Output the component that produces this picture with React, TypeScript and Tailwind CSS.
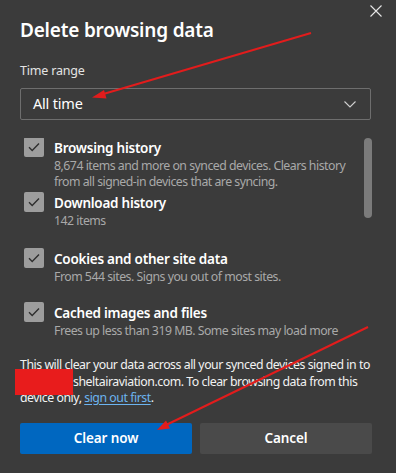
import React from "react";

const items = [
  {
    title: "Browsing history",
    desc: ["8,674 items and more on synced devices. Clears history", "from all signed-in devices that are syncing."],
    mt: "mt-0",
  },
  { title: "Download history", desc: ["142 items"], mt: "mt-[3px]" },
  { title: "Cookies and other site data", desc: ["From 544 sites. Signs you out of most sites."], mt: "mt-[20px]" },
  { title: "Cached images and files", desc: ["Frees up less than 319 MB. Some sites may load more"], mt: "mt-[18px]" },
];

function Check() {
  return (
    <div className="w-5 h-5 mt-[-1px] rounded-[2px] bg-[#9d9d9d] flex items-center justify-center shrink-0">
      <svg width="12" height="10" viewBox="0 0 12 10" fill="none">
        <path d="M1 5.2 L4.2 8.4 L11 1.6" stroke="#2e2e2e" strokeWidth="1.4" />
      </svg>
    </div>
  );
}

export default function App() {
  return (
    <div
      className="relative w-[396px] h-[473px] overflow-hidden bg-[#3b3b3b] text-white whitespace-nowrap"
      style={{ fontFamily: '"Noto Sans", "Open Sans", sans-serif' }}
    >
      <svg className="absolute left-[370px] top-[5px]" width="12" height="12" viewBox="0 0 12 12">
        <path d="M0.5 0.5 L11.5 11.5 M11.5 0.5 L0.5 11.5" stroke="#e6e6e6" strokeWidth="1.1" />
      </svg>

      <div className="pl-5 pr-[25px] pt-4">
        <div className="text-[19px] leading-[28px] font-semibold tracking-[-0.2px]">Delete browsing data</div>
        <div className="mt-[18px] text-[12.5px] leading-[18px] text-[#e4e4e4] tracking-[-0.2px]">Time range</div>
        <div className="mt-2 h-[32px] border border-[#6e6e6e] rounded-[2px] flex items-center justify-between pl-3 pr-[14px]">
          <span className="text-[14.5px] text-white tracking-[-0.2px]">All time</span>
          <svg width="12" height="7" viewBox="0 0 12 7" fill="none">
            <path d="M0.5 0.5 L6 6 L11.5 0.5" stroke="#d0d0d0" strokeWidth="1.1" />
          </svg>
        </div>
      </div>

      <div className="relative mt-[18px] h-[212px] overflow-hidden">
        <div className="absolute left-[364px] top-0 w-2 h-20 rounded-full bg-[#7b7b7b]" />
        <div className="pl-6 pr-[44px]">
          {items.map((it) => (
            <div key={it.title} className={`${it.mt} flex gap-[10px]`}>
              <Check />
              <div>
                <div className="text-[13.5px] leading-[20px] font-semibold text-white tracking-[-0.25px]">{it.title}</div>
                {it.desc.map((d) => (
                  <div key={d} className="text-[12.3px] leading-[16px] text-[#a9a9a9] tracking-[-0.5px]">{d}</div>
                ))}
              </div>
            </div>
          ))}
        </div>
      </div>

      <div className="relative px-5 mt-[7px] text-[12.3px] leading-[16.5px] text-[#f2f2f2] tracking-[-0.46px]">
        <div className="absolute left-[15px] top-[12px] w-[58px] h-[26px] bg-[#e81c1c]" />
        <div>This will clear your data across all your synced devices signed in to</div>
        <div className="pl-[53px]">sheltairaviation.com. To clear browsing data from this</div>
        <div>
          device only, <span className="text-[#6cb4f0] underline underline-offset-2">sign out first</span>.
        </div>
      </div>

      <div className="pl-5 pr-6 mt-4 flex gap-2">
        <button className="flex-1 h-[31px] rounded-[2px] bg-[#0067c0] text-[13.5px] font-semibold text-white tracking-[-0.1px]">
          Clear now
        </button>
        <button className="flex-1 h-[31px] rounded-[2px] bg-[#4a4a4a] text-[13.5px] font-semibold text-white tracking-[-0.1px]">
          Cancel
        </button>
      </div>

      <svg className="absolute inset-0 pointer-events-none" width="396" height="473" viewBox="0 0 396 473">
        <line x1="311" y1="33" x2="100" y2="95" stroke="#e21c1c" strokeWidth="2" />
        <polygon points="92,97.5 104,90 106.5,98.5" fill="#e21c1c" />
        <line x1="368" y1="327" x2="164" y2="426" stroke="#e21c1c" strokeWidth="2" />
        <polygon points="157,430 166,420.5 170,428.5" fill="#e21c1c" />
      </svg>
    </div>
  );
}
